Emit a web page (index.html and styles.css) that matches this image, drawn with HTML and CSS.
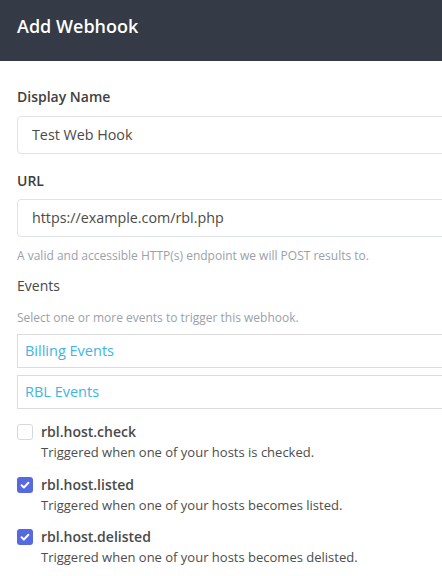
FILE: index.html
```html
<!DOCTYPE html>
<html lang="en">
<head>
<meta charset="utf-8">
<title>Add Webhook</title>
<link rel="stylesheet" href="styles.css">
</head>
<body>
<header class="modal-header">
  <h1 class="modal-title">Add Webhook</h1>
</header>
<main class="modal-body">
  <div class="field field-name">
    <label class="field-label">Display Name</label>
    <div class="text-input">Test Web Hook</div>
  </div>
  <div class="field field-url">
    <label class="field-label">URL</label>
    <div class="text-input">https://example.com/rbl.php</div>
    <p class="help">A valid and accessible HTTP(s) endpoint we will POST results to.</p>
  </div>
  <div class="field field-events">
    <label class="field-label label-events">Events</label>
    <p class="help help-events">Select one or more events to trigger this webhook.</p>
    <div class="groups">
      <div class="group">Billing Events</div>
      <div class="group">RBL Events</div>
    </div>
    <ul class="events">
      <li class="event">
        <span class="box"></span>
        <div class="event-text">
          <div class="event-name">rbl.host.check</div>
          <div class="event-desc">Triggered when one of your hosts is checked.</div>
        </div>
      </li>
      <li class="event">
        <span class="box checked"><svg viewBox="0 0 16 16" width="16" height="16"><path d="M4.6 8.3 L6.9 10.5 L11.4 5.8" fill="none" stroke="#fff" stroke-width="2" stroke-linecap="round" stroke-linejoin="round"/></svg></span>
        <div class="event-text">
          <div class="event-name">rbl.host.listed</div>
          <div class="event-desc">Triggered when one of your hosts becomes listed.</div>
        </div>
      </li>
      <li class="event">
        <span class="box checked"><svg viewBox="0 0 16 16" width="16" height="16"><path d="M4.6 8.3 L6.9 10.5 L11.4 5.8" fill="none" stroke="#fff" stroke-width="2" stroke-linecap="round" stroke-linejoin="round"/></svg></span>
        <div class="event-text">
          <div class="event-name">rbl.host.delisted</div>
          <div class="event-desc">Triggered when one of your hosts becomes delisted.</div>
        </div>
      </li>
    </ul>
  </div>
</main>
</body>
</html>
```
FILE: styles.css
```css
* { box-sizing: border-box; }
html, body {
  margin: 0;
  padding: 0;
  background: #fff;
  overflow: hidden;
}
body {
  font-family: "Open Sans", "Liberation Sans", sans-serif;
  color: #444;
  width: 442px;
}
.modal-header {
  height: 61px;
  background: #343a46;
  padding: 14px 17px 0;
}
.modal-title {
  margin: 0;
  font-size: 18px;
  line-height: 24px;
  font-weight: 600;
  color: #fff;
}
.modal-body {
  padding: 27px 0 0 17px;
  width: 470px;
}
.field-label {
  display: block;
  font-size: 14px;
  line-height: 18px;
  font-weight: 600;
  color: #3f3f3f;
  margin-bottom: 10px;
}
.text-input {
  height: 38px;
  border: 1px solid #dfe2e6;
  border-radius: 4px;
  padding: 8px 14px;
  font-size: 14.3px;
  line-height: 20px;
  color: #4a4a4a;
}
.field-name { margin-bottom: 18px; }
.field-url .field-label { margin-bottom: 9px; }
.help {
  margin: 11px 0 0;
  font-size: 12px;
  line-height: 16px;
  color: #9aa1a9;
}
.field-events { margin-top: 13px; }
.label-events { margin-bottom: 0; font-weight: 500; color: #474747; }
.help-events { margin-top: 15px; }
.groups {
  display: flex;
  flex-direction: column;
  gap: 7px;
  margin-top: 8px;
}
.group {
  border: 1px solid #dcdcdc;
  padding: 6px 7px;
  font-size: 14.5px;
  line-height: 20px;
  color: #3eb5e3;
}
.events {
  list-style: none;
  margin: 13px 0 0;
  padding: 0;
  display: flex;
  flex-direction: column;
  gap: 12.5px;
}
.event {
  display: flex;
  gap: 8px;
  align-items: flex-start;
}
.box {
  width: 16px;
  height: 16px;
  flex: none;
  margin-top: 2px;
  border: 1px solid #d6d9dd;
  border-radius: 3px;
  background: #fff;
  display: flex;
}
.box.checked {
  border: none;
  background: #5669e0;
}
.event-name {
  font-size: 14px;
  line-height: 20px;
  font-weight: 600;
  color: #4a4a4a;
}
.event-desc {
  font-size: 13px;
  line-height: 20px;
  color: #4d4d4d;
}
```
